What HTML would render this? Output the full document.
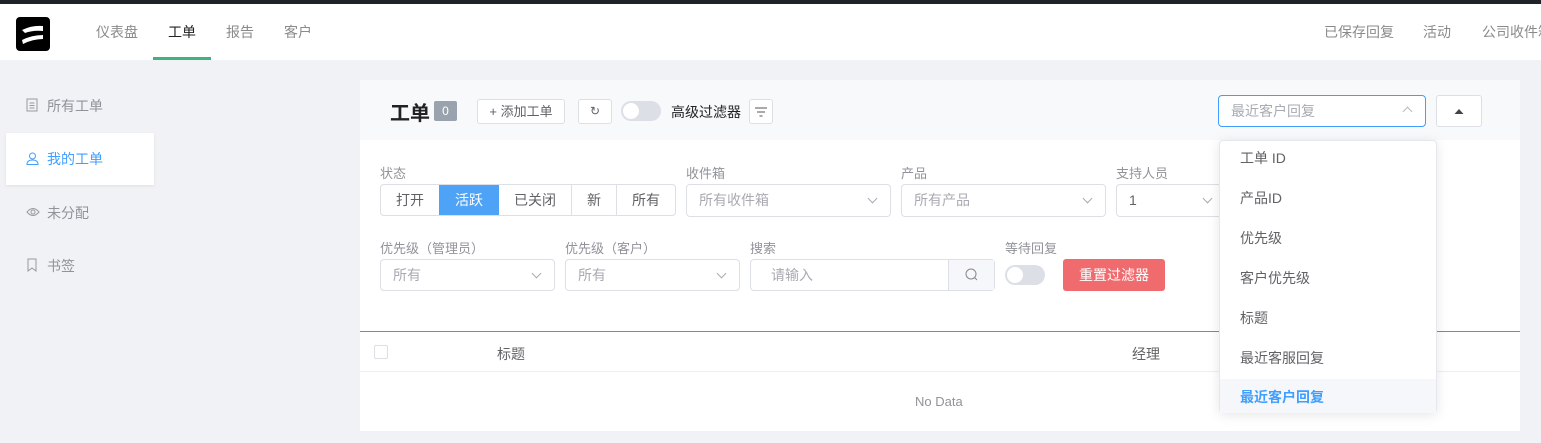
<!DOCTYPE html><html><head><meta charset="utf-8"><style>
*{margin:0;padding:0;box-sizing:border-box}
body{width:1541px;height:443px;overflow:hidden;background:#f0f2f5;font-family:"Liberation Sans","Noto Sans CJK SC",sans-serif;font-size:14px;color:#606266;position:relative}
.a{position:absolute}
.lbl{font-size:13px;color:#909399}
.sel{position:absolute;height:33px;border:1px solid #dcdfe6;border-radius:4px;background:#fff;color:#a8abb2;padding:0 12px;line-height:31px}
.sel:after{content:"";position:absolute;right:14px;top:10px;width:6px;height:6px;border-right:1px solid #a8abb2;border-bottom:1px solid #a8abb2;transform:rotate(45deg)}
.btn{position:absolute;border:1px solid #dcdfe6;border-radius:3px;background:#fff;text-align:center}
.mi{position:absolute;left:0;width:216px;height:40px;line-height:40px;padding-left:20px;color:#606266}
.tg{position:absolute;width:40px;height:20px;border-radius:10px;background:#dcdfe6}
.tg:after{content:"";position:absolute;left:2px;top:2px;width:16px;height:16px;border-radius:50%;background:#fff}
.si{position:absolute;left:26px}
</style></head><body>
<div class="a" style="left:0;top:0;width:1541px;height:4px;background:#1f2329"></div>
<div class="a" style="left:0;top:4px;width:1541px;height:56px;background:#fff"></div>
<div class="a" style="left:16px;top:17px;width:34px;height:34px;background:#000;border-radius:4px">
<svg width="34" height="34"><path d="M6 13 Q16 8 27 9 L27 14 Q17 13 9 16Z M6 23 Q16 18 27 18 L27 22 Q17 22 7 27Z" fill="#fff"/></svg></div>
<div class="a" style="left:96px;top:22px;color:#8a8a8a">仪表盘</div>
<div class="a" style="left:168px;top:22px;color:#222">工单</div>
<div class="a" style="left:153px;top:57px;width:58px;height:3px;background:#3fb27f"></div>
<div class="a" style="left:226px;top:22px;color:#8a8a8a">报告</div>
<div class="a" style="left:284px;top:22px;color:#8a8a8a">客户</div>
<div class="a" style="left:1324px;top:22px;color:#8a8a8a">已保存回复</div>
<div class="a" style="left:1423px;top:22px;color:#8a8a8a">活动</div>
<div class="a" style="left:1482px;top:22px;color:#8a8a8a;white-space:nowrap">公司收件箱</div>

<svg class="si" style="top:98px" width="12" height="14"><rect x="1" y="1" width="10" height="12" fill="none" stroke="#999"/><path d="M3.5 5h5M3.5 7.5h5M3.5 10h5" stroke="#999"/></svg>
<div class="a" style="left:47px;top:96px;color:#909399">所有工单</div>
<div class="a" style="left:6px;top:133px;width:148px;height:52px;background:#fff;box-shadow:0 1px 3px rgba(0,0,0,.08)"></div>
<svg class="si" style="top:152px" width="13" height="13"><circle cx="6.5" cy="4" r="3" fill="none" stroke="#409eff"/><path d="M1 12.5 Q1 8 6.5 8 Q12 8 12 12.5Z" fill="none" stroke="#409eff"/></svg>
<div class="a" style="left:47px;top:149px;color:#409eff">我的工单</div>
<svg class="si" style="top:206px" width="14" height="12"><path d="M1 6 Q7 -1 13 6 Q7 13 1 6Z" fill="none" stroke="#999"/><circle cx="7" cy="6" r="2" fill="none" stroke="#999"/></svg>
<div class="a" style="left:47px;top:203px;color:#909399">未分配</div>
<svg class="si" style="top:258px" width="12" height="14"><path d="M2 1h8v12l-4-3-4 3Z" fill="none" stroke="#999"/></svg>
<div class="a" style="left:47px;top:256px;color:#909399">书签</div>

<div class="a" style="left:360px;top:80px;width:1160px;height:351px;background:#fff"></div>
<div class="a" style="left:360px;top:80px;width:1160px;height:60px;background:#f8f9fb"></div>
<div class="a" style="left:390px;top:97px;font-size:20px;font-weight:bold;color:#222">工单</div>
<div class="a" style="left:434px;top:101px;width:23px;height:20px;background:#9aa3ad;color:#fff;font-size:12px;text-align:center;line-height:20px;border-radius:2px">0</div>
<div class="btn" style="left:477px;top:99px;width:88px;height:25px;line-height:23px;font-size:13px">+ 添加工单</div>
<div class="btn" style="left:578px;top:99px;width:34px;height:25px;line-height:23px;font-size:12px">↻</div>
<div class="tg" style="left:621px;top:101px"></div>
<div class="a" style="left:671px;top:102px;color:#222">高级过滤器</div>
<div class="btn" style="left:749px;top:99px;width:24px;height:25px"><svg width="22" height="23"><path d="M5 8h12M7 12h8M9.5 16h3" stroke="#555"/></svg></div>
<div class="a" style="left:1218px;top:95px;width:208px;height:32px;border:1px solid #409eff;border-radius:4px;background:#fff;color:#a8abb2;padding-left:12px;line-height:30px">最近客户回复<span style="position:absolute;right:14px;top:12px;width:7px;height:7px;border-left:1px solid #bbb;border-top:1px solid #bbb;transform:rotate(45deg)"></span></div>
<div class="btn" style="left:1436px;top:95px;width:46px;height:32px"><svg width="44" height="30"><path d="M17.5 18h9l-4.5-5Z" fill="#444"/></svg></div>

<div class="a lbl" style="left:380px;top:163px">状态</div>
<div class="a" style="left:380px;top:184px;width:296px;height:32px;border:1px solid #dcdfe6;border-radius:4px;background:#fff;display:flex;line-height:30px;color:#606266">
<div style="width:58px;text-align:center">打开</div><div style="width:60px;text-align:center;background:#4fa3f7;color:#fff">活跃</div><div style="width:73px;text-align:center;border-right:1px solid #dcdfe6">已关闭</div><div style="width:45px;text-align:center;border-right:1px solid #dcdfe6">新</div><div style="flex:1;text-align:center">所有</div></div>
<div class="a lbl" style="left:686px;top:163px">收件箱</div><div class="sel" style="left:686px;top:184px;width:205px">所有收件箱</div>
<div class="a lbl" style="left:901px;top:163px">产品</div><div class="sel" style="left:901px;top:184px;width:205px">所有产品</div>
<div class="a lbl" style="left:1116px;top:163px">支持人员</div><div class="sel" style="left:1116px;top:184px;width:110px;color:#606266">1</div>
<div class="a lbl" style="left:380px;top:238px">优先级（管理员）</div><div class="sel" style="left:380px;top:259px;width:175px;height:32px">所有</div>
<div class="a lbl" style="left:565px;top:238px">优先级（客户）</div><div class="sel" style="left:565px;top:259px;width:175px;height:32px">所有</div>
<div class="a lbl" style="left:750px;top:238px">搜索</div>
<div class="a" style="left:750px;top:259px;width:245px;height:32px;border:1px solid #dcdfe6;border-radius:4px;background:#fff;color:#a8abb2;padding-left:20px;line-height:30px">请输入<div style="position:absolute;right:0;top:0;width:46px;height:30px;background:#f5f7fa;border-left:1px solid #dcdfe6"><svg width="46" height="30"><circle cx="22" cy="14" r="5" fill="none" stroke="#888"/><path d="M25.5 17.5l2.5 2.5" stroke="#888"/></svg></div></div>
<div class="a lbl" style="left:1005px;top:238px">等待回复</div>
<div class="tg" style="left:1005px;top:265px"></div>
<div class="a" style="left:1063px;top:259px;width:102px;height:32px;background:#f06b6e;border-radius:3px;color:#fff;text-align:center;line-height:32px">重置过滤器</div>
<div class="a" style="left:360px;top:331px;width:1160px;height:1px;background:#888"></div>
<div class="a" style="left:374px;top:345px;width:14px;height:14px;border:1px solid #dcdfe6;border-radius:2px"></div>
<div class="a" style="left:497px;top:344px;color:#606266">标题</div>
<div class="a" style="left:1132px;top:344px;color:#606266">经理</div>
<div class="a" style="left:360px;top:371px;width:1160px;height:1px;background:#ebeef5"></div>
<div class="a" style="left:915px;top:394px;font-size:13px;color:#909399">No Data</div>

<div class="a" style="left:1219px;top:140px;width:218px;height:273px;background:#fff;border:1px solid #e4e7ed;border-radius:4px;box-shadow:0 2px 12px rgba(0,0,0,.1)">
<div class="mi" style="top:-3px">工单 ID</div><div class="mi" style="top:37px">产品ID</div><div class="mi" style="top:77px">优先级</div><div class="mi" style="top:117px">客户优先级</div><div class="mi" style="top:157px">标题</div><div class="mi" style="top:197px">最近客服回复</div><div class="mi" style="top:238px;background:#f5f7fa;color:#409eff;font-weight:bold;height:34px;line-height:36px">最近客户回复</div></div>
</body></html>
